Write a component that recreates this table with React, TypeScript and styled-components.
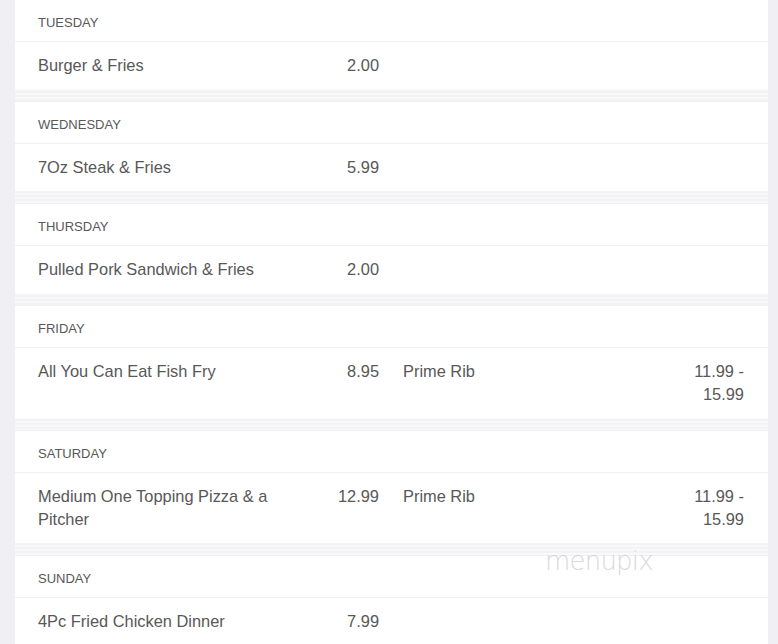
import React from "react";
import styled, { createGlobalStyle } from "styled-components";

const Global = createGlobalStyle`
  html, body { margin: 0; padding: 0; background: #efeff4; }
  body { font-family: "Liberation Sans", Arial, sans-serif; overflow: hidden; }
`;

const Page = styled.div`
  position: relative;
  width: 778px;
  height: 644px;
  overflow: hidden;
  background: #efeff4;
`;

const List = styled.div`
  margin: -1px 10px 0 15px;
  display: flex;
  flex-direction: column;
  background: repeating-linear-gradient(
    to bottom,
    #f3f3f6 0px,
    #f3f3f6 2px,
    #f9f9fb 2px,
    #f9f9fb 4px
  );
`;

const Section = styled.section`
  background: #fff;
  margin-bottom: 12px;
  border-top: 1px solid #f0f0f3;
`;

const DayHeader = styled.div`
  padding: 14px 23px 10px;
  font-size: 13px;
  line-height: 17px;
  color: #585858;
  text-transform: uppercase;
  border-bottom: 1px solid #f0f0f2;
`;

const Row = styled.div`
  display: grid;
  grid-template-columns: 1fr 1fr;
  column-gap: 24px;
  padding: 12px 24px 12px 23px;
`;

const Item = styled.div`
  display: flex;
  align-items: flex-start;
  gap: 14px;
  font-size: 16.4px;
  line-height: 23px;
  color: #585858;
`;

const Name = styled.div`
  flex: 1;
  min-width: 0;
`;

const Price = styled.div`
  width: 62px;
  text-align: right;
`;

const Watermark = styled.div`
  position: absolute;
  left: 545px;
  top: 546px;
  font-family: "DejaVu Sans", sans-serif;
  font-weight: 200;
  font-size: 26px;
  letter-spacing: -0.8px;
  color: rgba(190, 190, 190, 0.6);
  pointer-events: none;
`;

type Dish = { name: string; price: string };
type Day = { day: string; items: Dish[] };

const days: Day[] = [
  { day: "Tuesday", items: [{ name: "Burger & Fries", price: "2.00" }] },
  { day: "Wednesday", items: [{ name: "7Oz Steak & Fries", price: "5.99" }] },
  { day: "Thursday", items: [{ name: "Pulled Pork Sandwich & Fries", price: "2.00" }] },
  {
    day: "Friday",
    items: [
      { name: "All You Can Eat Fish Fry", price: "8.95" },
      { name: "Prime Rib", price: "11.99 - 15.99" },
    ],
  },
  {
    day: "Saturday",
    items: [
      { name: "Medium One Topping Pizza & a Pitcher", price: "12.99" },
      { name: "Prime Rib", price: "11.99 - 15.99" },
    ],
  },
  { day: "Sunday", items: [{ name: "4Pc Fried Chicken Dinner", price: "7.99" }] },
];

export default function App() {
  return (
    <Page>
      <Global />
      <List>
        {days.map((d) => (
          <Section key={d.day}>
            <DayHeader>{d.day}</DayHeader>
            <Row>
              {d.items.map((it, i) => (
                <Item key={i}>
                  <Name>{it.name}</Name>
                  <Price>{it.price}</Price>
                </Item>
              ))}
            </Row>
          </Section>
        ))}
      </List>
      <Watermark>menupix</Watermark>
    </Page>
  );
}
